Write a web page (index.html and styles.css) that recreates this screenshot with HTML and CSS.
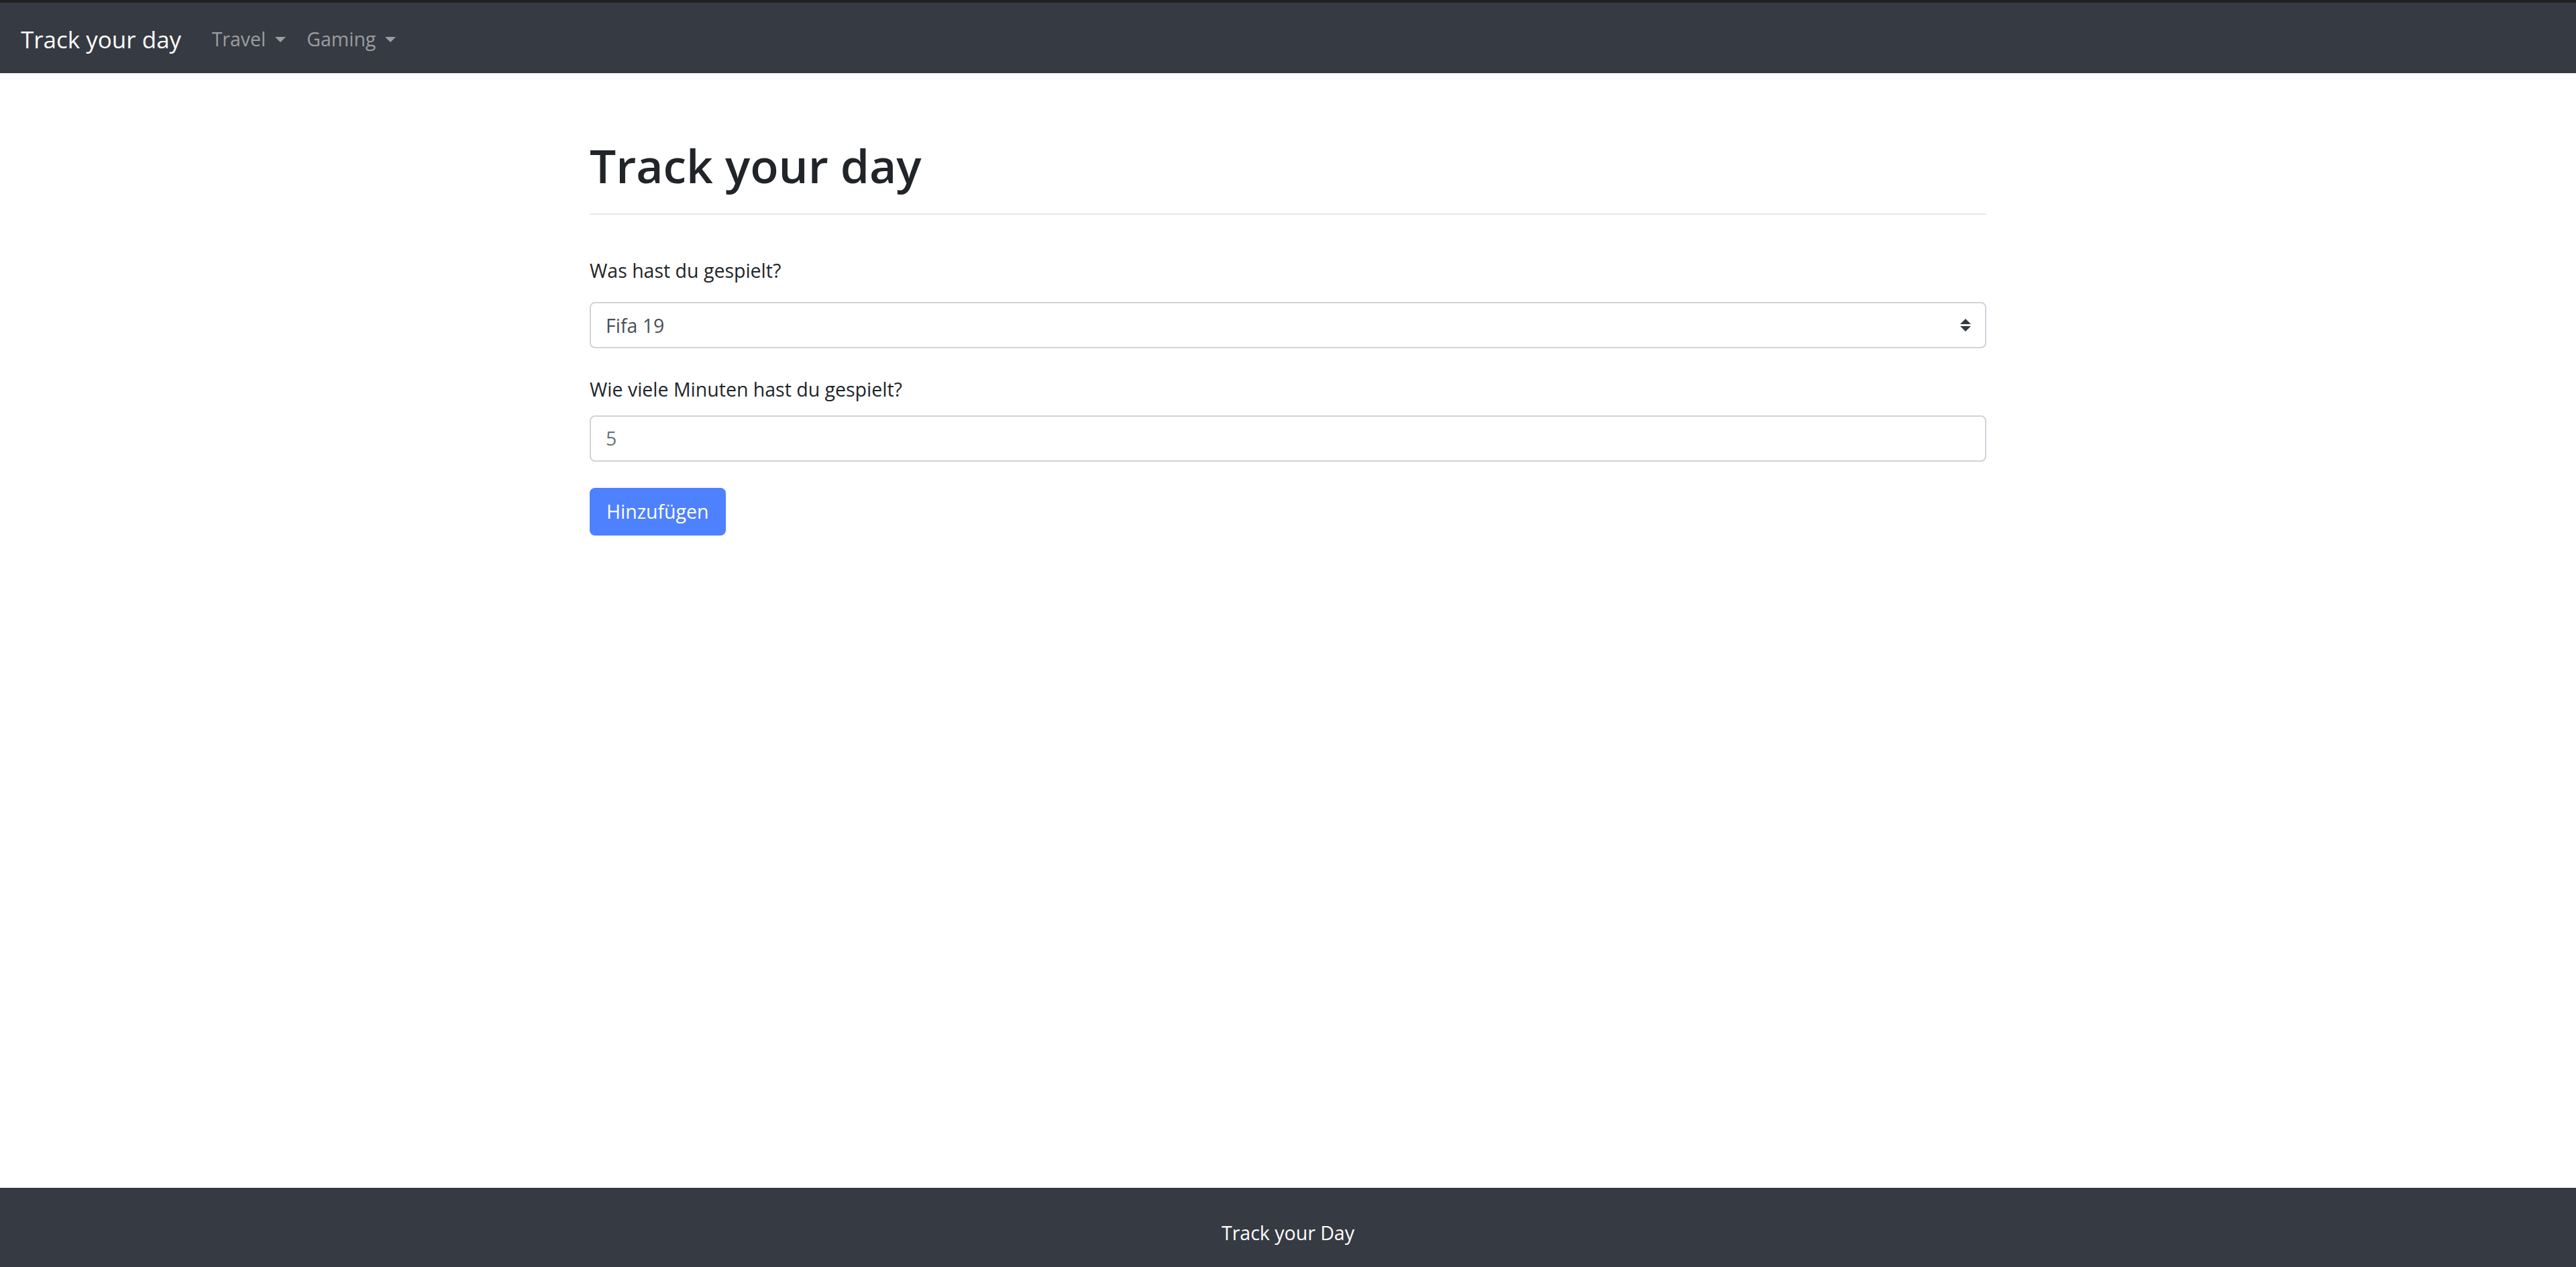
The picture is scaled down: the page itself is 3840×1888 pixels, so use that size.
FILE: index.html
```html
<!DOCTYPE html>
<html lang="de">
<head>
<meta charset="utf-8">
<title>Track your day</title>
<link rel="stylesheet" href="styles.css">
</head>
<body>
<nav class="navbar">
  <a class="brand" href="#">Track your day</a>
  <ul class="nav">
    <li><a class="nav-link" href="#">Travel<span class="caret"></span></a></li>
    <li><a class="nav-link" href="#">Gaming<span class="caret"></span></a></li>
  </ul>
</nav>
<main class="main">
  <div class="container">
    <h1 class="title">Track your day</h1>
    <form class="form">
      <label class="label label-first" for="game">Was hast du gespielt?</label>
      <div class="select-wrap">
        <select id="game" class="control select">
          <option>Fifa 19</option>
        </select>
        <svg class="select-arrow" width="16" height="19" viewBox="0 0 16 19" aria-hidden="true">
          <path d="M8 0 L16 8 L0 8 Z" fill="#343a40"/>
          <path d="M0 11 L16 11 L8 19 Z" fill="#343a40"/>
        </svg>
      </div>
      <label class="label label-second" for="minutes">Wie viele Minuten hast du gespielt?</label>
      <input id="minutes" class="control input" type="number" placeholder="5">
      <button class="btn" type="button">Hinzufügen</button>
    </form>
  </div>
</main>
<footer class="footer">Track your Day</footer>
</body>
</html>
```

FILE: styles.css
```css
* { box-sizing: border-box; }

html, body {
  margin: 0;
  padding: 0;
}

body {
  font-family: "Open Sans", "Noto Sans", "Liberation Sans", sans-serif;
  font-size: 28.5px;
  line-height: 1.5;
  color: #212529;
  background: #ffffff;
  min-height: 100vh;
  display: flex;
  flex-direction: column;
}

.navbar {
  display: flex;
  align-items: center;
  height: 109px;
  padding: 3px 31px 0 31px;
  background: #363a42;
  border-top: 4px solid #1f2022;
}

.brand {
  color: #ffffff;
  text-decoration: none;
  font-size: 35px;
  line-height: 1.5;
  margin-right: 30px;
  margin-top: 2px;
}

.nav {
  display: flex;
  list-style: none;
  margin: 0;
  padding: 0;
}

.nav-link {
  display: flex;
  align-items: center;
  color: rgba(255, 255, 255, 0.5);
  text-decoration: none;
  padding: 0 15.5px;
}

.caret {
  display: inline-block;
  width: 0;
  height: 0;
  margin-left: 14px;
  margin-top: 2px;
  border-top: 8px solid rgba(255, 255, 255, 0.5);
  border-left: 8px solid transparent;
  border-right: 8px solid transparent;
}

.main {
  flex: 1;
  padding-top: 96px;
}

.container {
  width: 2082px;
  margin: 0 auto;
}

.title {
  margin: 0;
  font-size: 69.5px;
  font-weight: 600;
  line-height: 1.2;
  padding-bottom: 30px;
  border-bottom: 2px solid #e6e6e6;
}

.form {
  margin-top: 62px;
}

.label {
  display: block;
  line-height: 42.75px;
}

.label-first {
  margin-bottom: 25px;
}

.label-second {
  margin-top: 40px;
  margin-bottom: 17px;
}

.control {
  display: block;
  width: 100%;
  height: 69px;
  padding: 0 22px;
  font-family: inherit;
  font-size: 28.5px;
  color: #495057;
  background: #ffffff;
  border: 2px solid #ced4da;
  border-radius: 8px;
  outline: none;
}

.select-wrap {
  position: relative;
}

.select {
  appearance: none;
  -webkit-appearance: none;
}

.select-arrow {
  position: absolute;
  right: 23px;
  top: 25px;
  pointer-events: none;
}

.input::placeholder {
  color: #6c757d;
  opacity: 1;
}

.btn {
  display: block;
  margin-top: 39px;
  height: 71px;
  padding: 0 25px;
  font-family: inherit;
  font-size: 28.5px;
  color: #ffffff;
  background: #4e81fe;
  border: none;
  border-radius: 8px;
}

.footer {
  height: 118px;
  padding-top: 46px;
  background: #363a42;
  color: #ffffff;
  text-align: center;
  line-height: 42.75px;
}
```
